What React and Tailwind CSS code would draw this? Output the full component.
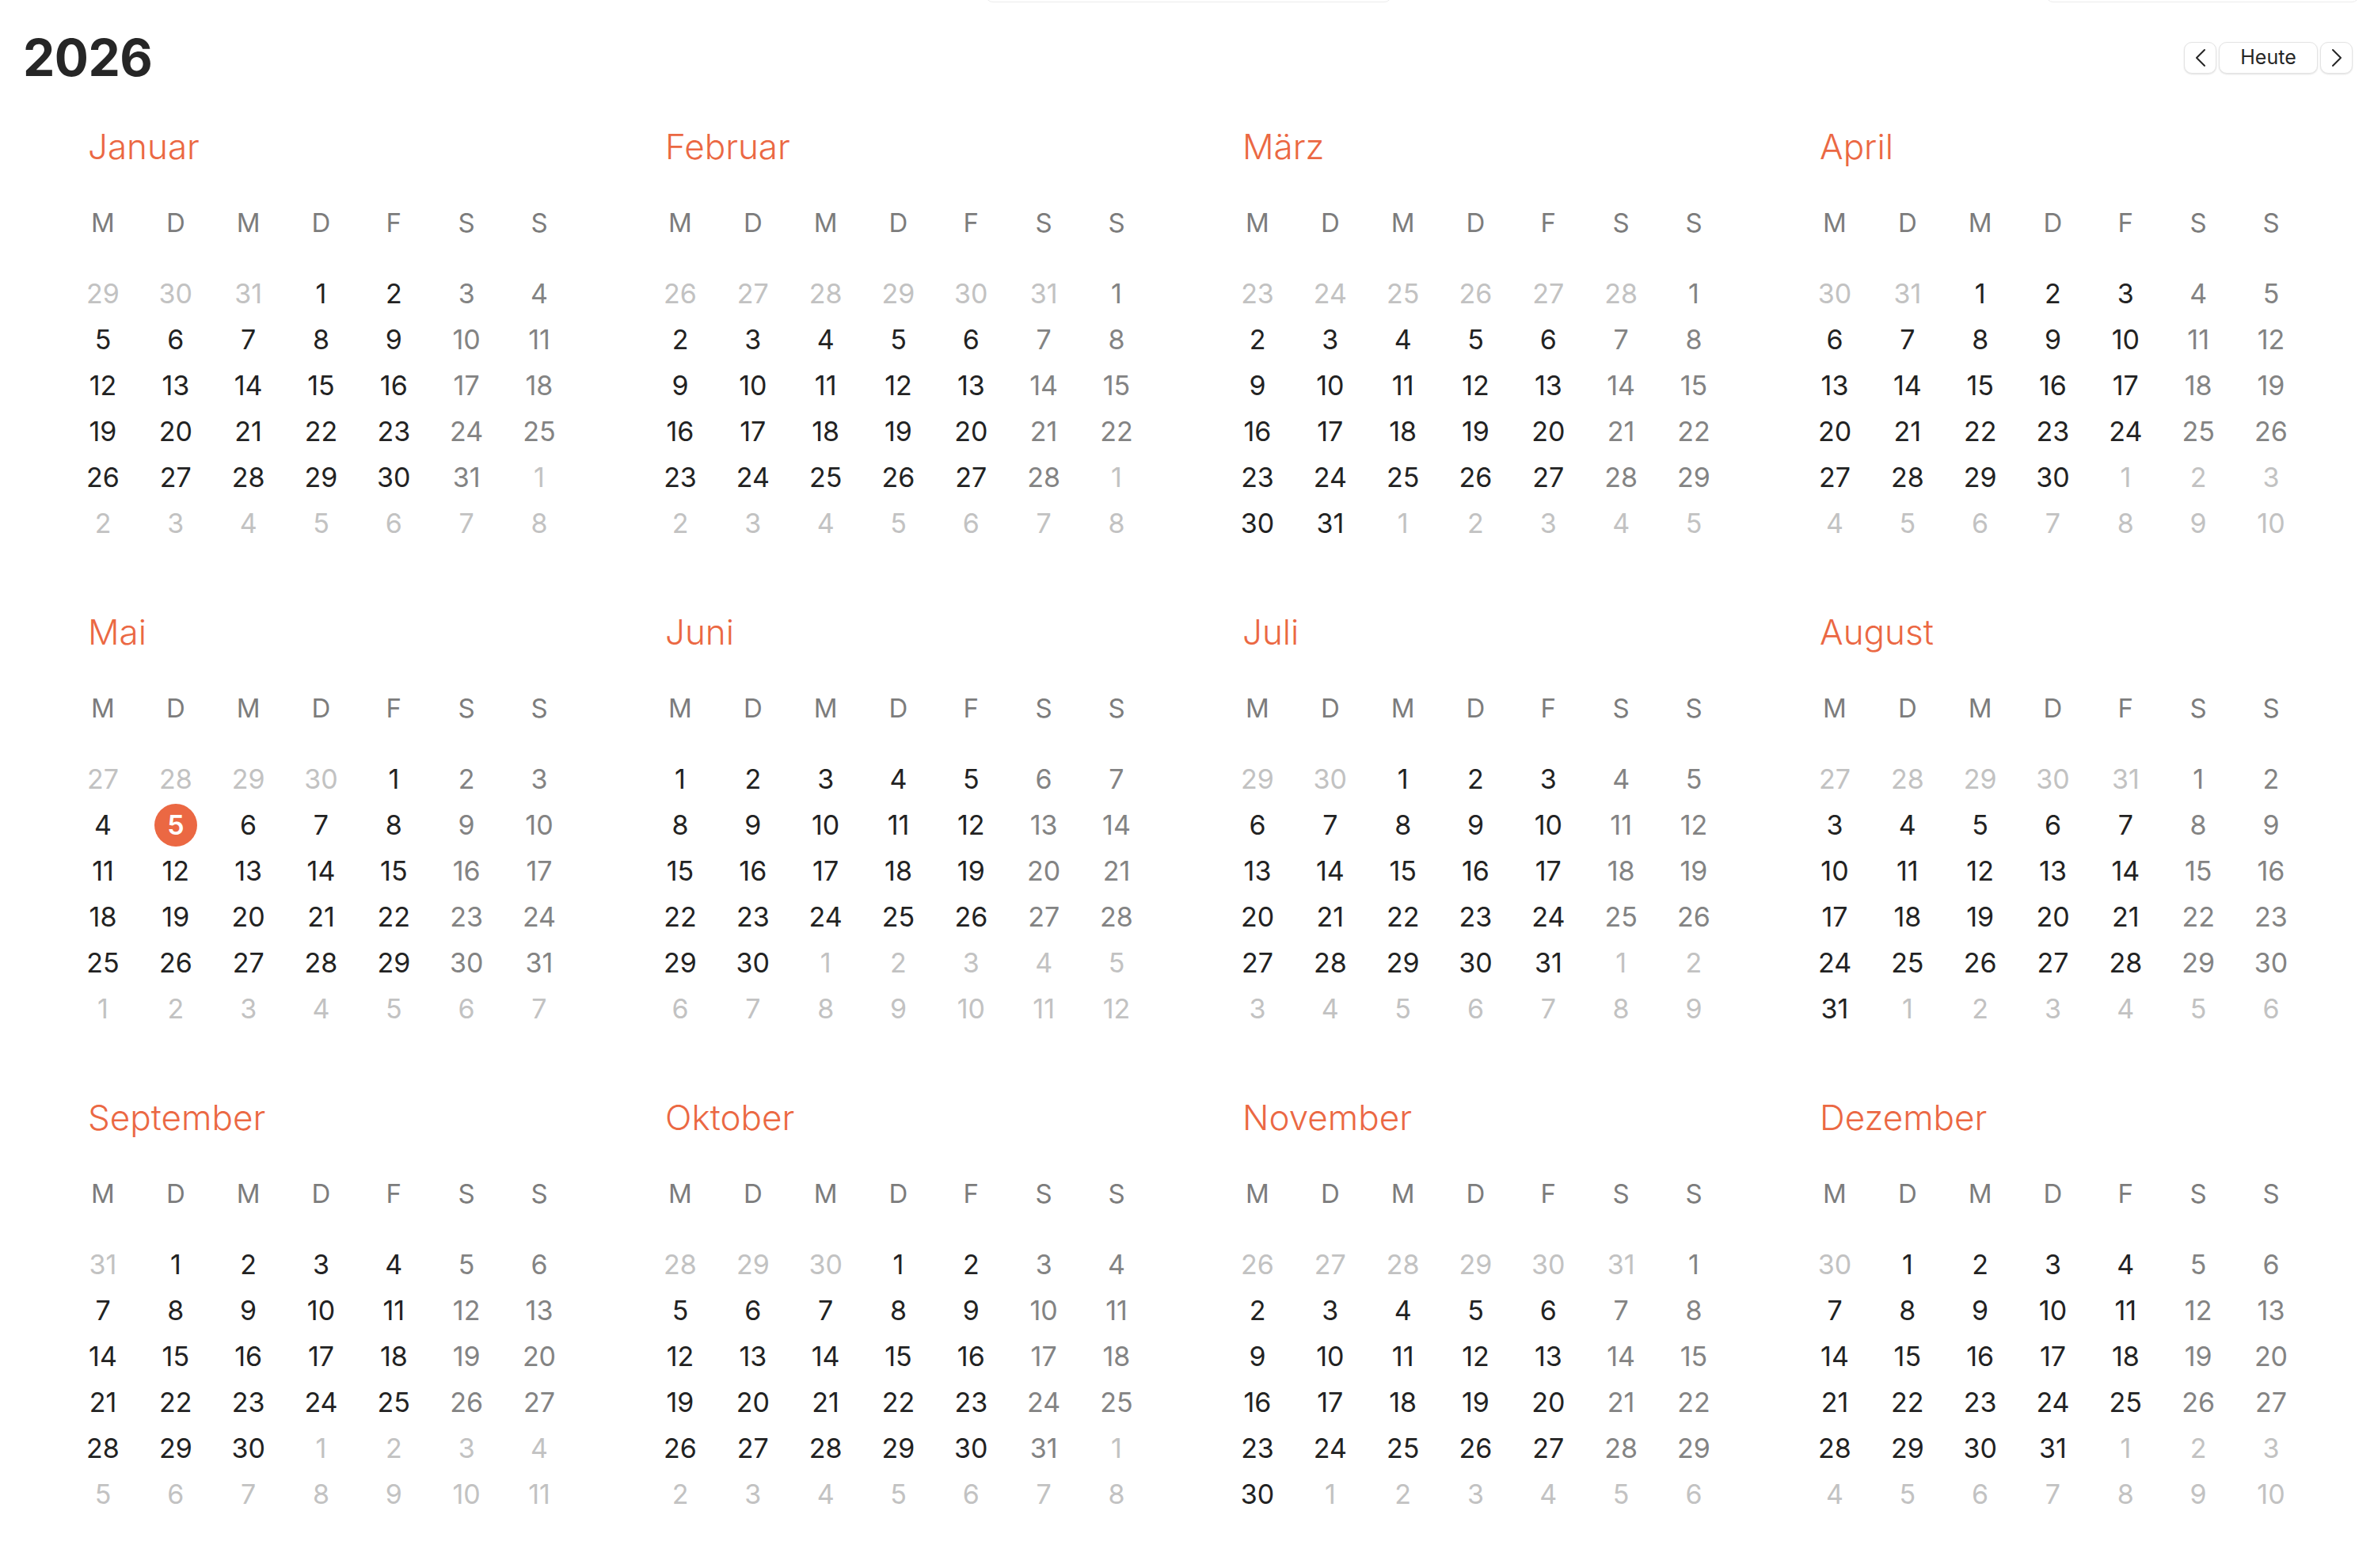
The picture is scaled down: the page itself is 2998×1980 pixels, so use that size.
const MONTHS = [
  'Januar', 'Februar', 'März', 'April', 'Mai', 'Juni',
  'Juli', 'August', 'September', 'Oktober', 'November', 'Dezember',
];
const WEEKDAYS = ['M', 'D', 'M', 'D', 'F', 'S', 'S'];
const YEAR = 2026;
const TODAY = { month: 4, day: 5 };

// 6 Wochen ab dem Montag vor dem Monatsersten
const buildWeeks = (year, month) => {
  const first = new Date(year, month, 1);
  const offset = (first.getDay() + 6) % 7;
  const weeks = [];
  for (let w = 0; w < 6; w++) {
    const row = [];
    for (let d = 0; d < 7; d++) {
      const date = new Date(year, month, 1 - offset + w * 7 + d);
      const inMonth = date.getMonth() === month;
      row.push({
        day: date.getDate(),
        inMonth,
        weekend: d >= 5,
        today: inMonth && month === TODAY.month && date.getDate() === TODAY.day,
      });
    }
    weeks.push(row);
  }
  return weeks;
};

const DayCell = ({ cell }) => {
  if (cell.today) {
    return (
      <div className="w-[36px] flex justify-center">
        <span className="shrink-0 w-[54px] h-[54px] rounded-full bg-[#eb6843] text-white font-semibold flex items-center justify-center">
          {cell.day}
        </span>
      </div>
    );
  }
  const color = !cell.inMonth
    ? 'text-[#c2c2c2]'
    : cell.weekend
      ? 'text-[#838383]'
      : 'text-[#222222]';
  return (
    <div className="w-[36px] flex justify-center">
      <span className={`shrink-0 whitespace-nowrap ${color}`}>{cell.day}</span>
    </div>
  );
};

const MonthBlock = ({ index }) => {
  const weeks = buildWeeks(YEAR, index);
  return (
    <div className="flex flex-col">
      {/* Monatsname */}
      <div className="h-[56px] leading-[56px] text-[44px] font-light text-[#eb6843] -ml-[1px]">
        {MONTHS[index]}
      </div>

      {/* Wochentage */}
      <div className="mt-[48px] h-[40px] leading-[40px] flex justify-between text-[33px] text-[#7c7c7c]">
        {WEEKDAYS.map((w, i) => (
          <div key={i} className="w-[36px] flex justify-center">
            <span className="shrink-0">{w}</span>
          </div>
        ))}
      </div>

      {/* Tage */}
      <div className="mt-[41px] flex flex-col text-[34px]">
        {weeks.map((row, r) => (
          <div key={r} className="h-[58px] leading-[58px] flex justify-between items-center">
            {row.map((cell, c) => (
              <DayCell key={c} cell={cell} />
            ))}
          </div>
        ))}
      </div>
    </div>
  );
};

const Chevron = ({ dir }) => (
  <svg width="14" height="24" viewBox="0 0 14 24" fill="none" stroke="#262626" strokeWidth="2" strokeLinecap="round" strokeLinejoin="round">
    {dir === 'left' ? <polyline points="12,2 2,12 12,22" /> : <polyline points="2,2 12,12 2,22" />}
  </svg>
);

const NavButton = ({ children, className = '' }) => (
  <button
    className={`h-[40px] flex items-center justify-center bg-white rounded-[10px] border border-[#e4e4e4] shadow-[0_1px_2px_rgba(0,0,0,0.12)] text-[#262626] ${className}`}
  >
    {children}
  </button>
);

export default function App() {
  return (
    <div className="relative min-h-screen bg-white overflow-hidden font-['Inter','Noto_Sans',sans-serif]">
      {/* angeschnittene Toolbar oben */}
      <div className="absolute top-[-37px] left-[1244px] w-[514px] h-[40px] rounded-[10px] border border-[#ececec] bg-white flex justify-end p-[2px]">
        <div className="w-[122px] h-full rounded-[8px] bg-[#ececec]" />
      </div>
      <div className="absolute top-[-37px] left-[2583px] w-[397px] h-[40px] rounded-[10px] border border-[#ececec] bg-white" />

      {/* Kopfzeile */}
      <div className="pt-[41px] pl-[29px] pr-[27px]">
        <div className="h-[64px] flex items-center justify-between">
          <h1 className="text-[64px] leading-none font-bold text-[#262626] tracking-[-0.5px]">{YEAR}</h1>
          <div className="flex items-center gap-[3px]">
            <NavButton className="w-[41px]">
              <Chevron dir="left" />
            </NavButton>
            <NavButton className="w-[125px] text-[25px]">Heute</NavButton>
            <NavButton className="w-[41px]">
              <Chevron dir="right" />
            </NavButton>
          </div>
        </div>
      </div>

      {/* Monate */}
      <div className="mt-[52px] px-[112px] grid grid-cols-4 gap-x-[142px] gap-y-[80px]">
        {MONTHS.map((_, i) => (
          <MonthBlock key={i} index={i} />
        ))}
      </div>
    </div>
  );
}
